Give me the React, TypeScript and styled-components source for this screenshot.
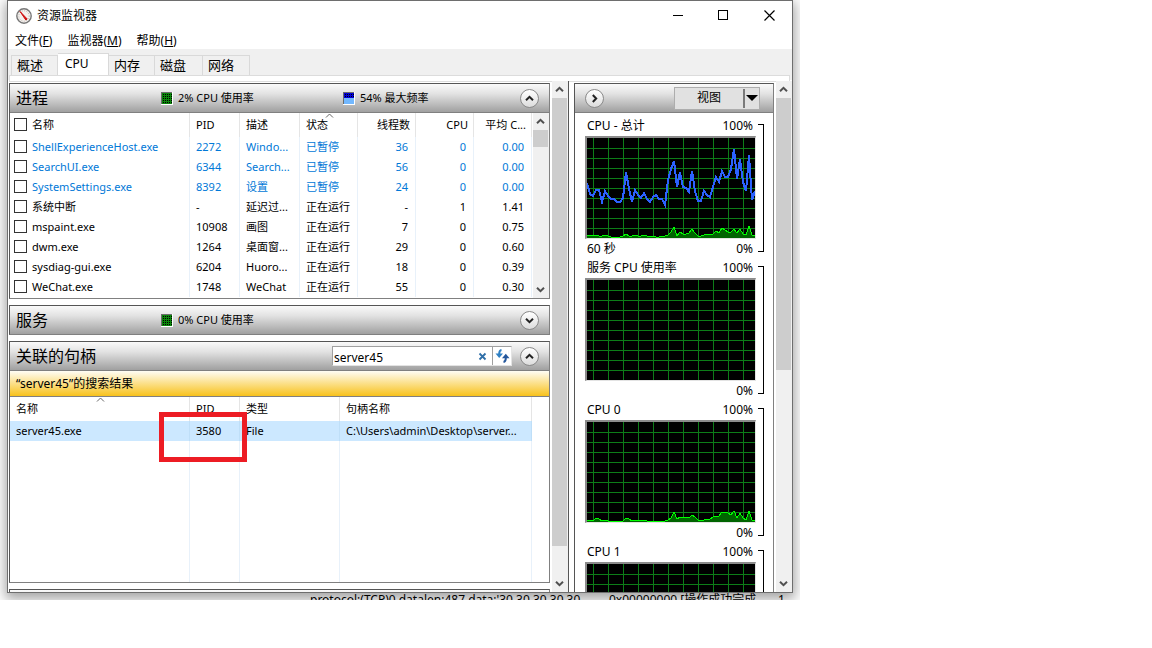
import React from "react";
import styled, { createGlobalStyle, css } from "styled-components";

const GlobalStyle = createGlobalStyle`
  * { box-sizing: border-box; }
  body { margin: 0; background: #fff; }
  body, button, input, table {
    font-family: "Noto Sans", "Noto Sans CJK SC", sans-serif;
    font-size: 11px;
    line-height: 16px;
    color: #000;
  }
  button { background: none; border: 0; padding: 0; margin: 0; }
`;

const Page = styled.div`
  display: grid;
  grid-template-columns: 25fr 11fr;
  height: 100vh;
  padding-bottom: 48px;
`;

const Stage = styled.main`
  display: flex;
  flex-direction: column;
  min-width: 0;
  min-height: 0;
  overflow: hidden;
`;

const Window = styled.section`
  position: relative;
  z-index: 1;
  flex: 1;
  min-height: 0;
  display: flex;
  flex-direction: column;
  margin: 0 7px;
  border: 1px solid #6e6e6e;
  background: #fff;
  box-shadow: 0 4px 12px 2px rgba(0, 0, 0, 0.36);
`;

const Backdrop = styled.div`
  display: flex;
  flex: none;
  height: 7px;
  padding: 0 16px 0 310px;
  overflow: hidden;
  white-space: nowrap;
  font-size: 12px;
  line-height: 14px;
  background: #fff;
`;

const BackdropText = styled.span<{ $width: number }>`
  flex: none;
  width: ${(p) => p.$width}px;
`;

const TitleBar = styled.header`
  display: flex;
  align-items: center;
  flex: none;
  height: 29px;
  padding-left: 8px;
`;

const Title = styled.h1`
  flex: 1;
  margin: 0 0 0 5px;
  font-size: 12px;
  font-weight: 400;
`;

const CaptionButton = styled.button`
  display: flex;
  align-items: center;
  justify-content: center;
  width: 46px;
  height: 28px;
`;

const MenuBar = styled.nav`
  display: flex;
  flex: none;
  gap: 15px;
  height: 19px;
  padding-left: 7px;
`;

const MenuItem = styled.button`
  height: 22px;
  font-size: 12px;
  line-height: 22px;
`;

const TabStrip = styled.div`
  display: flex;
  align-items: flex-end;
  flex: none;
  height: 26px;
  padding-left: 3px;
  background: #f0f0f0;
`;

const Tab = styled.button<{ $active?: boolean; $width: number }>`
  width: ${(p) => p.$width}px;
  height: 20px;
  padding: 0 0 2px 5px;
  border: 1px solid #d9d9d9;
  border-width: 1px 1px 0 0;
  font-size: 13px;
  text-align: left;
  &:first-child { border-left-width: 1px; }
  ${(p) =>
    p.$active &&
    css`
      height: 22px;
      padding-left: 7px;
      font-size: 12px;
      background: #fff;
    `}
`;

const TabEdge = styled.div`
  flex: none;
  height: 5px;
  background: #f0f0f0;
  padding: 0 2px 0 1px;
  &::before {
    content: "";
    display: block;
    height: 5px;
    border: 1px solid #dcdcdc;
    background: #fff;
  }
`;

const Body = styled.div`
  display: flex;
  flex: 1;
  min-height: 0;
  padding-top: 1px;
  overflow: hidden;
`;

const LeftSide = styled.div`
  display: flex;
  flex: 1;
  min-width: 0;
  border-right: 1px solid #555;
`;

const RightSide = styled.div`
  display: flex;
  flex: none;
  width: 223px;
  padding-left: 5px;
`;

const PaneStack = styled.div`
  flex: 1;
  min-width: 0;
  display: flex;
  flex-direction: column;
  gap: 6px;
  padding: 2px 2px 0 1px;
  overflow: hidden;
`;

const Pane = styled.section`
  position: relative;
  flex: none;
  border: 1px solid #808080;
  border-top-color: #555;
  border-left-color: #555;
`;

const ChartPane = styled(Pane)`
  width: 200px;
  margin: 2px 2px 0 0;
  height: 700px;
`;

const PaneHeader = styled.div`
  display: flex;
  align-items: center;
  height: 28px;
  padding: 0 10px 0 6px;
  background: linear-gradient(#fafafa, #e2e2e2 35%, #a0a0a0);
`;

const ChartHeader = styled(PaneHeader)`
  justify-content: space-between;
  height: 29px;
  padding: 0 13px 0 10px;
  border-bottom: 1px solid #808080;
`;

const PaneTitle = styled.h2`
  flex: none;
  width: 145px;
  margin: 0;
  font-size: 16px;
  line-height: 24px;
  font-weight: 400;
`;

const Stat = styled.span<{ $width?: number }>`
  display: flex;
  flex: none;
  align-items: center;
  gap: 5px;
  width: ${(p) => (p.$width ? `${p.$width}px` : "auto")};
  svg { flex: none; }
`;

const Grow = styled.span`
  flex: 1;
`;

const RoundButton = styled.button`
  display: flex;
  flex: none;
  align-items: center;
  justify-content: center;
  width: 19px;
  height: 19px;
  border: 1px solid #8a8a8a;
  border-radius: 50%;
  background: linear-gradient(#fff, #dcdcdc);
`;

const TableArea = styled.div`
  display: flex;
  border-top: 1px solid #808080;
  background: #fff;
`;

const ProcessArea = styled(TableArea)`
  gap: 1px;
  height: 186px;
`;

const DataTable = styled.table`
  flex: 1;
  align-self: flex-start;
  width: 100%;
  min-width: 0;
  table-layout: fixed;
  border-collapse: separate;
  border-spacing: 0;
`;

const HeadCell = styled.th<{ $right?: boolean }>`
  position: relative;
  height: 24px;
  padding: 0 5px 0 6px;
  border-right: 1px solid #e5e5e5;
  font-weight: 400;
  text-align: ${(p) => (p.$right ? "right" : "left")};
  white-space: nowrap;
`;

const Cell = styled.td<{ $right?: boolean }>`
  position: relative;
  height: 20px;
  padding: 0 7px 0 6px;
  border-right: 1px solid #e8f1fa;
  text-align: ${(p) => (p.$right ? "right" : "left")};
  white-space: nowrap;
`;

const Row = styled.tr<{ $suspended?: boolean; $selected?: boolean }>`
  color: ${(p) => (p.$suspended ? "#0078d7" : "#000")};
  background: ${(p) => (p.$selected ? "#cce8ff" : "transparent")};
  ${Cell} {
    border-right-color: ${(p) => (p.$selected ? "#bfdff8" : "#e8f1fa")};
  }
`;

const FillerCell = styled(Cell)`
  height: 141px;
`;

const CheckLabel = styled.label`
  display: flex;
  align-items: flex-start;
  gap: 5px;
  margin-left: -2px;
`;

const Check = styled.input`
  appearance: none;
  flex: none;
  width: 13px;
  height: 13px;
  margin: 1px 0 0;
  border: 1px solid #333;
  background: #fff;
`;

const SortMark = styled.svg`
  position: absolute;
  top: 0;
  left: 50%;
  margin-left: -4px;
`;

const HandleArea = styled(TableArea)`
  padding-right: 17px;
`;

const Highlight = styled.div`
  position: absolute;
  z-index: 2;
  top: -9px;
  left: -31px;
  width: 88px;
  height: 50px;
  border: 5px solid #ed1c24;
`;

const Notice = styled.div`
  height: 26px;
  padding-left: 6px;
  border-top: 1px solid #808080;
  font-size: 12px;
  line-height: 25px;
  background: linear-gradient(#fffdf5, #f8c21c);
`;

const SearchBox = styled.div`
  display: flex;
  align-items: center;
  width: 180px;
  height: 20px;
  margin-right: 8px;
  border: 1px solid #a0a0a0;
  border-right-color: #e3e3e3;
  border-bottom-color: #e3e3e3;
  background: #fff;
`;

const SearchInput = styled.input`
  flex: 1;
  min-width: 0;
  height: 18px;
  padding: 2px 0 0 1px;
  border: 0;
  background: none;
  font-size: 12px;
`;

const SearchAction = styled.button`
  display: flex;
  align-items: center;
  justify-content: center;
  width: 19px;
  height: 18px;
  & + & { border-left: 1px solid #a0a0a0; }
`;

const ViewButton = styled.button`
  display: flex;
  align-items: center;
  width: 86px;
  height: 23px;
  border: 1px solid #adadad;
  background: #e1e1e1;
  font-size: 12px;
`;

const ViewText = styled.span`
  flex: 1;
`;

const ViewArrow = styled.span`
  display: flex;
  align-items: center;
  justify-content: center;
  width: 16px;
  height: 19px;
  border-left: 2px solid #7a7a7a;
`;

const ChartList = styled.div`
  padding: 3px 9px 0 10px;
`;

const ChartBlock = styled.figure`
  display: grid;
  grid-template-columns: 171px 6px;
  column-gap: 2px;
  height: 142px;
  margin: 0;
`;

const ChartLabels = styled.div<{ $height: number }>`
  display: flex;
  justify-content: space-between;
  height: ${(p) => p.$height}px;
  padding: 0 3px 0 2px;
  font-size: 12px;
  line-height: ${(p) => p.$height}px;
`;

const ChartFrame = styled.div`
  height: 103px;
  border: 1px solid #e3e3e3;
  border-top: 2px solid #8c8c8c;
  border-left: 2px solid #8c8c8c;
  background: #000;
  svg { display: block; }
`;

const Bracket = styled.div`
  margin: 8px 0 6px;
  border: 1px solid #000;
  border-left: 0;
`;

const ScrollTrack = styled.div`
  display: flex;
  flex-direction: column;
  flex: none;
  width: 16px;
  background: #f0f0f0;
`;

const ScrollButton = styled.button`
  display: flex;
  align-items: center;
  justify-content: center;
  flex: none;
  width: 15px;
  height: 17px;
`;

const ThumbSpace = styled.div`
  flex: 1;
  min-height: 0;
`;

const Thumb = styled.div<{ $size: number }>`
  width: 15px;
  height: ${(p) => p.$size}%;
  background: #cdcdcd;
`;

function Chevron({ dir, color = "#505050" }: { dir: "up" | "down" | "right"; color?: string }) {
  const turn = { up: 0, right: 90, down: 180 }[dir];
  return (
    <svg width="9" height="9" viewBox="0 0 9 9" aria-hidden="true">
      <path d="M1 6.2 4.5 2.8 8 6.2" fill="none" stroke={color} strokeWidth="2" transform={`rotate(${turn} 4.5 4.5)`} />
    </svg>
  );
}

function Scrollbar({ size }: { size: number }) {
  return (
    <ScrollTrack>
      <ScrollButton aria-label="向上滚动"><Chevron dir="up" /></ScrollButton>
      <ThumbSpace><Thumb $size={size} /></ThumbSpace>
      <ScrollButton aria-label="向下滚动"><Chevron dir="down" /></ScrollButton>
    </ScrollTrack>
  );
}

function SortArrow() {
  return (
    <SortMark width="9" height="5" viewBox="0 0 9 5" aria-hidden="true">
      <path d="M1 4.5 4.5 1 8 4.5" fill="none" stroke="#666" />
    </SortMark>
  );
}

function UsageSwatch({ kind }: { kind: "cpu" | "freq" }) {
  const base = kind === "cpu" ? "#0b850b" : "#0000d8";
  const rows = kind === "cpu" ? [1, 3, 5, 7, 9] : [1, 3];
  return (
    <svg width="12" height="13" viewBox="0 0 12 13" shapeRendering="crispEdges" aria-hidden="true">
      <rect width="12" height="13" fill="#fff" />
      <rect width="11" height="12" fill="#6c6c6c" />
      <rect x="1" y="1" width="10" height="11" fill={kind === "cpu" ? base : "#72b8ff"} />
      {kind === "freq" && <rect x="1" y="1" width="10" height="5" fill={base} />}
      {rows.map((y) =>
        [2, 4, 6, 8, 10].map((x) => <rect key={`${x}-${y}`} x={x} y={y + 1} width="1" height="1" fill="#000" />)
      )}
    </svg>
  );
}

const totalFrequency = [
  55, 44, 42, 48, 48, 36, 47, 42, 39, 39, 36, 36, 40, 66, 49, 36, 48, 43, 40, 45, 39, 36, 41, 43, 39, 39, 33, 58, 69,
  77, 51, 66, 51, 50, 46, 67, 47, 37, 37, 47, 43, 41, 51, 61, 56, 67, 61, 61, 69, 89, 59, 79, 56, 47, 83, 38, 47,
];
const totalUsage = [
  2, 2, 1, 2, 1, 1, 2, 1, 0, 0, 0, 0, 1, 3, 1, 1, 2, 1, 1, 2, 1, 1, 1, 0, 0, 1, 1, 2, 5, 10, 1, 5, 3, 3, 4, 8, 4, 1, 1,
  2, 3, 3, 3, 6, 4, 9, 7, 5, 5, 8, 4, 8, 3, 2, 11, 2, 1,
];
const coreUsage = [
  1, 1, 0, 3, 2, 0, 1, 0, 0, 0, 0, 0, 0, 3, 2, 0, 1, 1, 1, 1, 0, 0, 0, 0, 0, 0, 0, 1, 3, 9, 2, 4, 3, 4, 3, 6, 4, 1, 0,
  1, 2, 2, 4, 5, 5, 9, 9, 8, 6, 10, 3, 8, 3, 1, 10, 1, 0,
];

const toPoints = (data: number[], base: number) => data.map((v, i) => `${i * 3},${base - v}`).join(" ");

interface ChartProps {
  name: string;
  span?: string;
  usage?: number[];
  frequency?: number[];
}

function Chart({ name, span, usage, frequency }: ChartProps) {
  return (
    <ChartBlock>
      <div>
        <ChartLabels $height={20}><span>{name}</span><span>100%</span></ChartLabels>
        <ChartFrame>
          <svg width="168" height="100" viewBox="0 0 168 100" role="img" aria-label={name}>
            <g fill="#0d7d18" shapeRendering="crispEdges">
              {Array.from({ length: 11 }, (_, i) => <rect key={i} x={6 + i * 15} y="0" width="1" height="100" />)}
              {Array.from({ length: 9 }, (_, i) => <rect key={i} x="0" y={10 + i * 10} width="168" height="1" />)}
            </g>
            {usage && (
              <g shapeRendering="crispEdges">
                <polygon points={`0,100 ${toPoints(usage, 99)} 168,100`} fill="#006400" />
                <polyline points={toPoints(usage, 99)} fill="none" stroke="#00ff00" />
              </g>
            )}
            {frequency && (
              <polyline points={toPoints(frequency, 100)} fill="none" stroke="#2c62ff" strokeWidth="2" shapeRendering="crispEdges" />
            )}
          </svg>
        </ChartFrame>
        <ChartLabels $height={19}><span>{span}</span><span>0%</span></ChartLabels>
      </div>
      <Bracket />
    </ChartBlock>
  );
}

const processes = [
  ["ShellExperienceHost.exe", "2272", "Windo...", "已暂停", "36", "0", "0.00"],
  ["SearchUI.exe", "6344", "Search...", "已暂停", "56", "0", "0.00"],
  ["SystemSettings.exe", "8392", "设置", "已暂停", "24", "0", "0.00"],
  ["系统中断", "-", "延迟过...", "正在运行", "-", "1", "1.41"],
  ["mspaint.exe", "10908", "画图", "正在运行", "7", "0", "0.75"],
  ["dwm.exe", "1264", "桌面窗...", "正在运行", "29", "0", "0.60"],
  ["sysdiag-gui.exe", "6204", "Huoro...", "正在运行", "18", "0", "0.39"],
  ["WeChat.exe", "1748", "WeChat", "正在运行", "55", "0", "0.30"],
];

function ProcessTable() {
  return (
    <ProcessArea>
      <DataTable>
        <colgroup>
          <col />
          {[50, 60, 58, 58, 58, 58].map((w, i) => <col key={i} width={w} />)}
        </colgroup>
        <thead>
          <tr>
            <HeadCell><CheckLabel><Check type="checkbox" />名称</CheckLabel></HeadCell>
            <HeadCell>PID</HeadCell>
            <HeadCell>描述</HeadCell>
            <HeadCell>状态<SortArrow /></HeadCell>
            <HeadCell $right>线程数</HeadCell>
            <HeadCell $right>CPU</HeadCell>
            <HeadCell $right>平均 C...</HeadCell>
          </tr>
        </thead>
        <tbody>
          {processes.map(([name, ...rest]) => (
            <Row key={name} $suspended={rest[2] === "已暂停"}>
              <Cell><CheckLabel><Check type="checkbox" />{name}</CheckLabel></Cell>
              {rest.map((value, i) => <Cell key={i} $right={i > 2}>{value}</Cell>)}
            </Row>
          ))}
        </tbody>
      </DataTable>
      <Scrollbar size={11} />
    </ProcessArea>
  );
}

function HandleTable() {
  return (
    <HandleArea>
      <DataTable>
        <colgroup>
          <col />
          <col width={50} />
          <col width={100} />
          <col width={192} />
        </colgroup>
        <thead>
          <tr>
            <HeadCell>名称<SortArrow /></HeadCell>
            <HeadCell>PID</HeadCell>
            <HeadCell>类型</HeadCell>
            <HeadCell>句柄名称</HeadCell>
          </tr>
        </thead>
        <tbody>
          <Row $selected>
            <Cell>server45.exe</Cell>
            <Cell>3580<Highlight /></Cell>
            <Cell>File</Cell>
            <Cell>C:\Users\admin\Desktop\server...</Cell>
          </Row>
          <tr><FillerCell /><FillerCell /><FillerCell /><FillerCell /></tr>
        </tbody>
      </DataTable>
    </HandleArea>
  );
}

export default function App() {
  return (
    <Page>
      <GlobalStyle />
      <Stage>
        <Window>
          <TitleBar>
            <svg width="16" height="16" viewBox="0 0 16 16" aria-hidden="true">
              <circle cx="8" cy="8" r="7.2" fill="#f4f1ee" stroke="#777" strokeWidth="1.4" />
              <circle cx="8" cy="8" r="5.2" fill="none" stroke="#b9b2ac" strokeDasharray="1 1.4" />
              <path d="M4 3.4 11.2 11 9.8 12Z" fill="#d01010" stroke="#d01010" />
            </svg>
            <Title>资源监视器</Title>
            <CaptionButton aria-label="最小化">
              <svg width="11" height="11"><path d="M1 5.5H11" stroke="#000" /></svg>
            </CaptionButton>
            <CaptionButton aria-label="最大化">
              <svg width="11" height="11"><rect x=".5" y=".5" width="9" height="9" fill="none" stroke="#000" /></svg>
            </CaptionButton>
            <CaptionButton aria-label="关闭">
              <svg width="11" height="11"><path d="M.5.5 10.5 10.5M10.5.5.5 10.5" stroke="#000" strokeWidth="1.2" /></svg>
            </CaptionButton>
          </TitleBar>
          <MenuBar>
            <MenuItem>文件(<u>F</u>)</MenuItem>
            <MenuItem>监视器(<u>M</u>)</MenuItem>
            <MenuItem>帮助(<u>H</u>)</MenuItem>
          </MenuBar>
          <TabStrip role="tablist">
            <Tab role="tab" $width={47}>概述</Tab>
            <Tab role="tab" aria-selected $active $width={51}>CPU</Tab>
            <Tab role="tab" $width={46}>内存</Tab>
            <Tab role="tab" $width={48}>磁盘</Tab>
            <Tab role="tab" $width={47}>网络</Tab>
          </TabStrip>
          <TabEdge />
          <Body>
            <LeftSide>
              <PaneStack>
                <Pane>
                  <PaneHeader>
                    <PaneTitle>进程</PaneTitle>
                    <Stat $width={182}><UsageSwatch kind="cpu" />2% CPU 使用率</Stat>
                    <Stat><UsageSwatch kind="freq" />54% 最大频率</Stat>
                    <Grow />
                    <RoundButton aria-label="折叠"><Chevron dir="up" color="#222" /></RoundButton>
                  </PaneHeader>
                  <ProcessTable />
                </Pane>
                <Pane>
                  <PaneHeader>
                    <PaneTitle>服务</PaneTitle>
                    <Stat><UsageSwatch kind="cpu" />0% CPU 使用率</Stat>
                    <Grow />
                    <RoundButton aria-label="展开"><Chevron dir="down" color="#222" /></RoundButton>
                  </PaneHeader>
                </Pane>
                <Pane>
                  <PaneHeader>
                    <PaneTitle>关联的句柄</PaneTitle>
                    <Grow />
                    <SearchBox>
                      <SearchInput aria-label="搜索句柄" defaultValue="server45" />
                      <SearchAction aria-label="清除">
                        <svg width="9" height="9"><path d="M1.5 1.5 7.5 7.5M7.5 1.5 1.5 7.5" stroke="#2f6fa8" strokeWidth="1.8" /></svg>
                      </SearchAction>
                      <SearchAction aria-label="刷新">
                        <svg width="15" height="14" viewBox="0 0 15 14">
                          <path d="M6.5 1C4.8 1.2 4.2 2.6 4.2 5" fill="none" stroke="#2f80c4" strokeWidth="2" />
                          <path d="M.5 4.6H8L4.2 9Z" fill="#2f80c4" />
                          <path d="M8.5 13C10.2 12.8 10.8 11.4 10.8 9" fill="none" stroke="#24579c" strokeWidth="2" />
                          <path d="M7 9.2H14.5L10.8 4.8Z" fill="#24579c" />
                        </svg>
                      </SearchAction>
                    </SearchBox>
                    <RoundButton aria-label="折叠"><Chevron dir="up" color="#222" /></RoundButton>
                  </PaneHeader>
                  <Notice>“server45”的搜索结果</Notice>
                  <HandleTable />
                </Pane>
                <Pane>
                  <PaneHeader />
                </Pane>
              </PaneStack>
              <Scrollbar size={94} />
            </LeftSide>
            <RightSide>
              <ChartPane>
                <ChartHeader>
                  <RoundButton aria-label="隐藏图表"><Chevron dir="right" color="#222" /></RoundButton>
                  <ViewButton>
                    <ViewText>视图</ViewText>
                    <ViewArrow>
                      <svg width="12" height="6"><path d="M0 0H12L6 6Z" /></svg>
                    </ViewArrow>
                  </ViewButton>
                </ChartHeader>
                <ChartList>
                  <Chart name="CPU - 总计" span="60 秒" usage={totalUsage} frequency={totalFrequency} />
                  <Chart name="服务 CPU 使用率" />
                  <Chart name="CPU 0" usage={coreUsage} />
                  <Chart name="CPU 1" />
                </ChartList>
              </ChartPane>
              <Scrollbar size={57} />
            </RightSide>
          </Body>
        </Window>
        <Backdrop>
          <BackdropText $width={299}>protocol:(TCP)0 datalen:487 data:'30 30 30 30 30</BackdropText>
          <BackdropText $width={169}>0x00000000 [操作成功完成</BackdropText>
          <BackdropText $width={8}>1</BackdropText>
        </Backdrop>
      </Stage>
    </Page>
  );
}
